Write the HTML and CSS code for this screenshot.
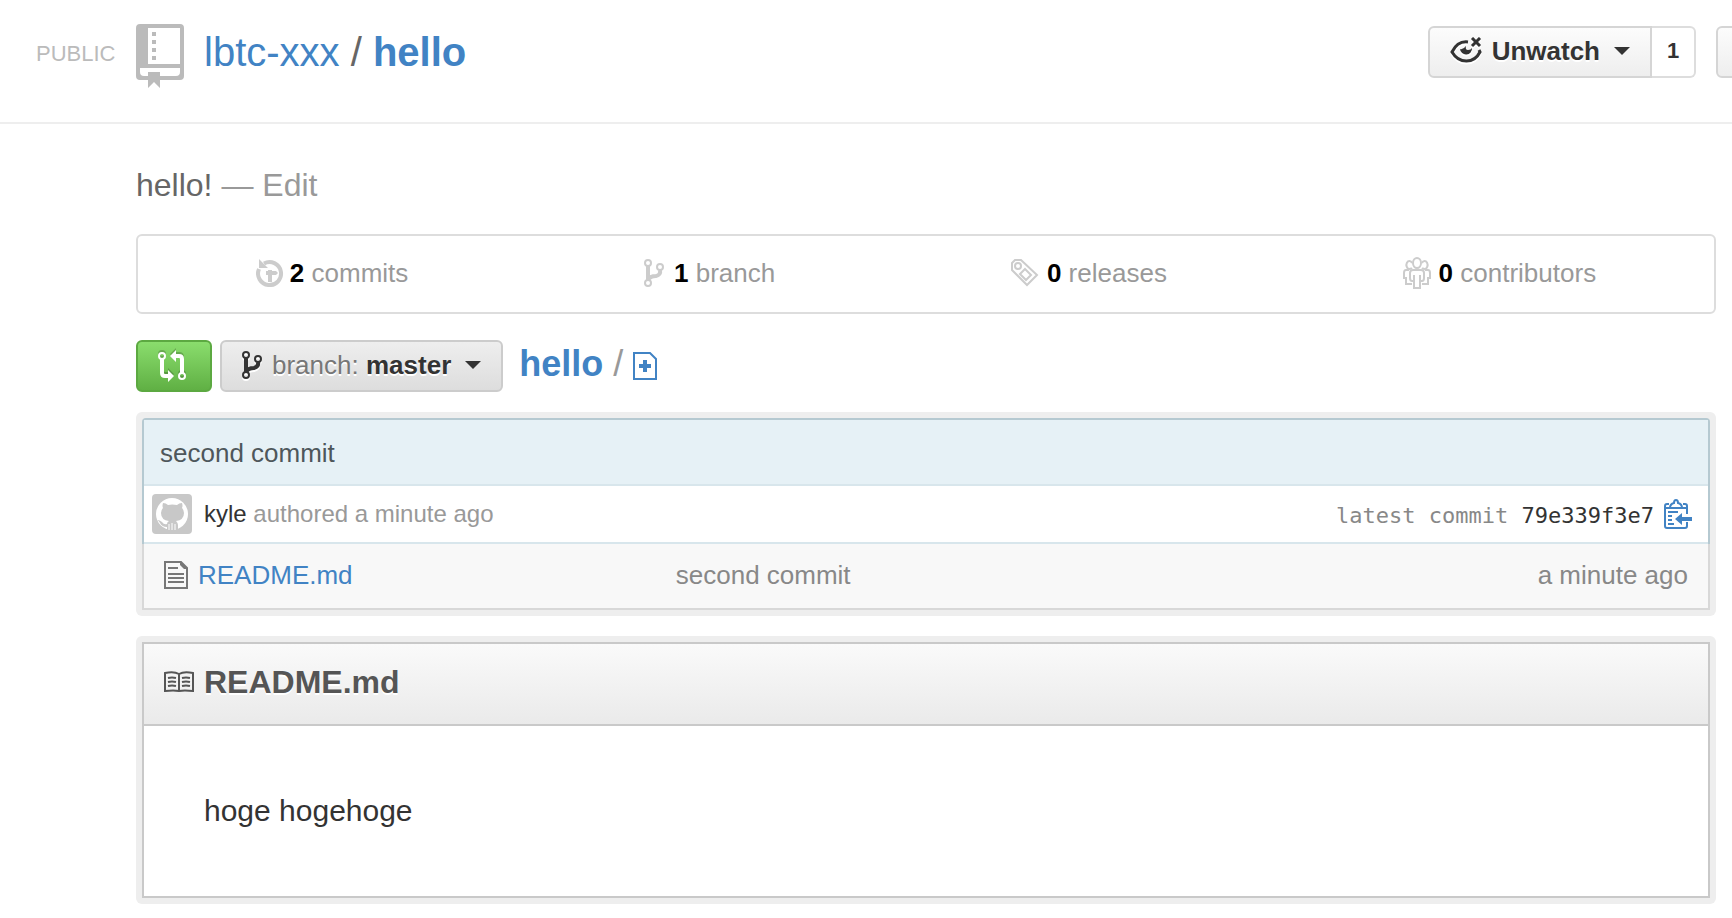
FILE: index.html
```
<!DOCTYPE html>
<html lang="en">
<head>
  <meta charset="UTF-8" />
  <meta name="viewport" content="width=device-width, initial-scale=1.0" />
  <title>lbtc-xxx/hello</title>
  <link rel="stylesheet" href="styles.css">
</head>
<body>
  <header class="repo-header">
    <span class="repo-label">PUBLIC</span>
    <svg class="repo-icon" width="48" height="64" viewBox="0 0 48 64" aria-hidden="true">
      <path fill-rule="evenodd" d="M4 0h40q4 0 4 4v48q0 4-4 4H24v8l-6-6-6 6v-8H4q-4 0-4-4V4q0-4 4-4zM12 4v36h32V4zM4 44v4q0 4 4 4h4v-4h12v4h16q4 0 4-4v-4z"/>
      <path d="M16 8h4v4h-4zM16 16h4v4h-4zM16 24h4v4h-4zM16 32h4v4h-4z"/>
    </svg>
    <h1 class="repo-title"><a href="#">lbtc-xxx</a> / <a href="#"><strong>hello</strong></a></h1>
    <div class="repo-actions">
      <div class="btn-group">
        <button class="btn btn-watch" type="button">
          <svg width="32" height="28" viewBox="0 0 32 28" aria-hidden="true">
            <path d="M18 5C10 4 5 9 2 15c7 12 22 12 28 0l-1-2" fill="none" stroke="currentColor" stroke-width="3"/>
            <path d="M16 9q-1 4 2 4 3 0 4-2a6 6 0 1 1-12 1q3 1 6-3z"/>
            <path d="M22 1l8 8M30 1l-8 8" fill="none" stroke="currentColor" stroke-width="3"/>
          </svg>
          <span>Unwatch</span>
          <span class="caret"></span>
        </button>
        <a class="btn-count" href="#">1</a>
      </div>
      <button class="btn btn-star" type="button" aria-label="Star"></button>
    </div>
  </header>

  <main>
    <p class="description">hello! <span class="edit-link">— <a href="#">Edit</a></span></p>

    <ul class="stats">
      <li>
        <a href="#">
          <svg width="28" height="28" viewBox="0 0 28 28" aria-hidden="true">
            <path d="M8 4.500A11.500 11.500 0 1 1 3 10" fill="none" stroke="currentColor" stroke-width="4"/>
            <path d="M3 0v9h9zM12 11h4v1h4l2 2-2 2h-4v7h-4v-7h-2v-4h2z"/>
          </svg>
          <span><strong>2</strong> commits</span>
        </a>
      </li>
      <li>
        <a href="#">
          <svg width="24" height="28" viewBox="0 0 24 28" aria-hidden="true">
            <g fill="none" stroke="currentColor">
              <g stroke-width="2"><circle cx="4" cy="4" r="3"/><circle cx="4" cy="24" r="3"/><circle cx="16" cy="8" r="3"/></g>
              <path d="M4 7v14M16 11q1 5-4 6-6 0-8 4" stroke-width="4"/>
            </g>
          </svg>
          <span><strong>1</strong> branch</span>
        </a>
      </li>
      <li>
        <a href="#">
          <svg width="30" height="28" viewBox="0 0 30 28" aria-hidden="true">
            <g fill="none" stroke="currentColor" stroke-width="2">
              <path d="M1 4l3-3h6l16 15-10 10L1 11z"/>
              <circle cx="7" cy="7" r="3"/>
              <path d="M14 10l6 6-5 5-6-6z"/>
            </g>
          </svg>
          <span><strong>0</strong> releases</span>
        </a>
      </li>
      <li>
        <a href="#">
          <svg width="30" height="32" viewBox="0 0 30 32" aria-hidden="true">
            <g fill="none" stroke="currentColor" stroke-width="2">
              <ellipse cx="14" cy="6" rx="4" ry="5"/>
              <path d="M9 11q-1 1-3 1a3 4 0 1 1 3-6M19 11q1 1 3 1a3 4 0 1 0-3-6"/>
              <path d="M11 31V18v6H9q-2 0-2-3v-5q0-3 3-3h8q3 0 3 3v5q0 3-2 3h-2v-6 13z"/>
              <path d="M6 13H3q-2 0-2 3v5h2v6h6M22 13h3q2 0 2 3v5h-2v6h-6"/>
            </g>
          </svg>
          <span><strong>0</strong> contributors</span>
        </a>
      </li>
    </ul>

    <div class="file-navigation">
      <button class="btn btn-compare" type="button" aria-label="Compare and review">
        <svg width="28" height="34" viewBox="0 0 28 34" aria-hidden="true">
          <g fill="none" stroke="currentColor">
            <g stroke-width="2"><circle cx="4" cy="7" r="3"/><circle cx="24" cy="27" r="3"/></g>
            <path d="M4 10v14q0 3 3 3h4M24 24V10q0-3-3-3h-4" stroke-width="4"/>
          </g>
          <path d="M10 21l6 6-6 6zM18 1l-6 6 6 6z"/>
        </svg>
      </button>
      <button class="btn btn-branch" type="button" aria-haspopup="true">
        <svg width="20" height="28" viewBox="0 0 20 28" aria-hidden="true">
          <g fill="none" stroke="currentColor">
            <g stroke-width="2"><circle cx="4" cy="4" r="3"/><circle cx="4" cy="24" r="3"/><circle cx="16" cy="8" r="3"/></g>
            <path d="M4 7v14M16 11q1 5-4 6-6 0-8 4" stroke-width="4"/>
          </g>
        </svg>
        <span><i>branch:</i> <strong>master</strong></span>
        <span class="caret"></span>
      </button>
      <div class="breadcrumb">
        <a href="#"><strong>hello</strong></a>
        <span class="separator">/</span>
        <a class="new-file" href="#" aria-label="Create a new file here">
          <svg width="24" height="28" viewBox="0 0 24 28" aria-hidden="true">
            <path d="M1 1h16l6 6v20H1z" fill="none" stroke="currentColor" stroke-width="2"/>
            <path d="M10 8h4v4h4v4h-4v4h-4v-4H6v-4h4z"/>
          </svg>
        </a>
      </div>
    </div>

    <section class="bubble">
      <div class="commit">
        <p class="commit-title"><a href="#">second commit</a></p>
        <div class="commit-meta">
          <svg class="avatar" width="40" height="40" viewBox="0 0 40 40" aria-hidden="true">
            <rect width="40" height="40" rx="4" fill="#c8c8c8"/>
            <circle cx="20" cy="20" r="16" fill="#fff"/>
            <path d="M11 9q3 0 5 2 4-1 9 0 2-2 5-2 1 3 0 5 2 2 2 5 0 7-8 8 2 2 2 4v5H15v-3q-5 0-7-4-1-2-3-3 3 0 5 2 2 3 5 2 0-2 2-3-8-1-8-8 0-3 2-5-1-2 0-5z" fill="#c8c8c8"/>
            <path d="M17 30v6M20 29v7M23 30v6" stroke="#fff"/>
          </svg>
          <span class="authorship"><a href="#">kyle</a> authored a minute ago</span>
          <span class="sha-block">latest commit <a href="#">79e339f3e7</a></span>
          <button class="btn-copy" type="button" aria-label="Copy SHA">
            <svg width="28" height="30" viewBox="0 0 28 30" aria-hidden="true">
              <g fill="none" stroke="currentColor" stroke-width="2">
                <path d="M5 5H3q-2 0-2 2v20q0 2 2 2h18q2 0 2-2v-4M19 5h2q2 0 2 2v8M1 9h22"/>
                <path d="M6 9q0-4 4-5 0-3 2-3t2 3q4 1 4 5"/>
                <path d="M4 13h10M4 17h4M4 21h4M4 25h6"/>
              </g>
              <path d="M11 20l7-6v4h10v4H18v4z"/>
            </svg>
          </button>
        </div>
      </div>
      <table class="files">
        <tbody>
          <tr>
            <td class="content">
              <a href="#">
                <svg width="24" height="28" viewBox="0 0 24 28" aria-hidden="true">
                  <path d="M1 1h16l6 6v20H1z" fill="none" stroke="currentColor" stroke-width="2"/>
                  <path d="M16 0l8 8h-4l-4-4zM4 6h10v2H4zM4 12h16v2H4zM4 16h16v2H4zM4 20h16v2H4z"/>
                </svg>
                <span>README.md</span>
              </a>
            </td>
            <td class="message">second commit</td>
            <td class="age">a minute ago</td>
          </tr>
        </tbody>
      </table>
    </section>

    <section class="bubble">
      <div class="readme">
        <h2 class="readme-name">
          <svg width="30" height="22" viewBox="0 0 30 22" aria-hidden="true">
            <g fill="none" stroke="currentColor" stroke-width="2">
              <path d="M1 2q9-2 14 1 5-3 14-1v18q-9-1-14 0-5-1-14 0zM15 3v17"/>
              <path d="M4 7q4-1 8 0M4 11q4-1 8 0M4 15q4-1 8 0M18 7q4-1 8 0M18 11q4-1 8 0M18 15q4-1 8 0"/>
            </g>
          </svg>
          <span>README.md</span>
        </h2>
        <article class="readme-body">
          <p>hoge hogehoge</p>
        </article>
      </div>
    </section>
  </main>
</body>
</html>
```
FILE: styles.css
```
:root {
  --link: #4183c4;
  --text: #333;
  --text-muted: #999;
  --border: #ddd;
  --border-btn: #d5d5d5;
  --radius: 6px;
}
* {
  box-sizing: border-box;
}
body {
  margin: 0;
  background: #fff;
  color: var(--text);
  font-family: "Liberation Sans", Arial, sans-serif;
  font-size: 26px;
  overflow-x: hidden;
}
h1, h2, p, ul {
  margin: 0;
  padding: 0;
}
a {
  color: var(--link);
  text-decoration: none;
}
a:hover {
  text-decoration: underline;
}
svg {
  flex: none;
  fill: currentColor;
}

/* Header */
.repo-header {
  display: flex;
  align-items: flex-start;
  padding: 24px 0 34px 36px;
  border-bottom: 2px solid #eee;
  overflow: hidden;
}
.repo-label {
  width: 100px;
  font-size: 22px;
  line-height: 60px;
  color: #bbb;
}
.repo-icon {
  color: #bbb;
}
.repo-title {
  margin-left: 20px;
  font-size: 40px;
  line-height: 56px;
  font-weight: normal;
  color: #666;
  white-space: nowrap;
}
.repo-actions {
  display: flex;
  gap: 20px;
  margin: 2px -44px 0 auto;
}

/* Buttons */
.btn {
  display: flex;
  align-items: center;
  height: 52px;
  padding: 0 20px 2px;
  border: 2px solid var(--border-btn);
  border-radius: var(--radius);
  background: linear-gradient(#fcfcfc, #eee);
  color: var(--text);
  font-family: inherit;
  font-size: 26px;
  font-weight: bold;
  text-shadow: 0 2px 0 #fff;
  white-space: nowrap;
  cursor: pointer;
}
.btn-group {
  display: flex;
}
.btn-watch {
  gap: 10px;
  border-radius: var(--radius) 0 0 var(--radius);
}
.caret {
  margin-left: 4px;
  border: 8px solid transparent;
  border-top-color: currentColor;
  border-bottom: 0;
}
.btn-count {
  width: 44px;
  border: 2px solid var(--border);
  border-left: 0;
  border-radius: 0 var(--radius) var(--radius) 0;
  color: var(--text);
  font-size: 22px;
  font-weight: bold;
  line-height: 46px;
  text-align: center;
}
.btn-star {
  width: 60px;
}

main {
  margin: 0 16px 0 136px;
  padding: 40px 0 14px;
}
.description {
  margin-bottom: 28px;
  font-size: 32px;
  line-height: 42px;
  color: #666;
}
.edit-link, .edit-link a {
  color: var(--text-muted);
}

/* Stats */
.stats {
  display: flex;
  justify-content: space-around;
  height: 80px;
  margin-bottom: 26px;
  border: 2px solid var(--border);
  border-radius: var(--radius);
  list-style: none;
}
.stats a {
  display: flex;
  align-items: center;
  gap: 6px;
  height: 74px;
  color: var(--text-muted);
}
.stats svg {
  color: #ccc;
}
.stats strong {
  color: #000;
}

/* Branch and path */
.file-navigation {
  display: flex;
  gap: 8px;
  margin-bottom: 20px;
}
.btn-compare {
  width: 76px;
  padding-bottom: 0;
  border-color: #5ca941;
  background: linear-gradient(#8add6d, #60b044);
  color: #fff;
}
.btn-compare svg {
  filter: drop-shadow(0 -2px 0 rgba(0, 0, 0, 0.2));
}
.btn-branch {
  gap: 10px;
  border-color: #ccc;
  background: linear-gradient(#eee, #ddd);
}
.btn-branch i {
  font-style: normal;
  font-weight: normal;
  color: #777;
}
.btn-branch svg, .btn-watch svg {
  filter: drop-shadow(0 2px 0 #fff);
}
.breadcrumb {
  display: flex;
  gap: 10px;
  margin-left: 8px;
  font-size: 36px;
  line-height: 48px;
}
.separator {
  color: var(--text-muted);
}
.new-file {
  display: flex;
  align-items: center;
  height: 52px;
}

/* Boxes */
.bubble {
  margin-bottom: 20px;
  padding: 6px;
  border-radius: var(--radius);
  background: #eee;
}
.bubble:last-child {
  margin-bottom: 0;
}
.commit {
  border: 2px solid #b5c9d1;
  border-bottom: 0;
  border-radius: 4px 4px 0 0;
  background: #fff;
}
.commit-title {
  padding: 18px 16px 16px;
  border-bottom: 2px solid #d8e6ec;
  background: #e6f1f6;
  line-height: 30px;
}
.commit-title a {
  color: #4e575b;
}
.commit-meta {
  display: flex;
  align-items: center;
  height: 58px;
  padding: 0 16px 0 8px;
  border-bottom: 2px solid #d8e6ec;
  font-size: 24px;
  color: var(--text-muted);
}
.authorship {
  margin-left: 12px;
}
.authorship a {
  color: var(--text);
}
.sha-block {
  margin-left: auto;
  padding-top: 2px;
  font-family: "DejaVu Sans Mono", monospace;
  font-size: 22px;
  color: #888;
}
.sha-block a {
  color: var(--text);
}
.btn-copy {
  display: flex;
  margin-left: 10px;
  padding: 0;
  border: 0;
  background: none;
  color: var(--link);
  cursor: pointer;
}
.files {
  width: 100%;
  border: 2px solid #d8d8d8;
  border-top: 0;
  border-spacing: 0;
  background: #f8f8f8;
}
.files td {
  height: 64px;
  padding: 0 0 2px;
  color: #888;
}
.files .content {
  width: 34%;
  padding-left: 20px;
}
.content a {
  display: flex;
  align-items: center;
  gap: 10px;
}
.content svg {
  color: #777;
}
.files .age {
  padding-right: 20px;
  text-align: right;
}

/* Readme */
.readme {
  border: 2px solid #c9c9c9;
  background: #fff;
}
.readme-name {
  display: flex;
  align-items: center;
  gap: 10px;
  padding: 18px 20px 22px;
  border-bottom: 2px solid #c9c9c9;
  background: linear-gradient(#fafafa, #eaeaea);
  color: #555;
  font-size: 32px;
  line-height: 40px;
  text-shadow: 0 2px 0 #fff;
}
.readme-body {
  padding: 60px;
  font-size: 30px;
  line-height: 50px;
}
```
